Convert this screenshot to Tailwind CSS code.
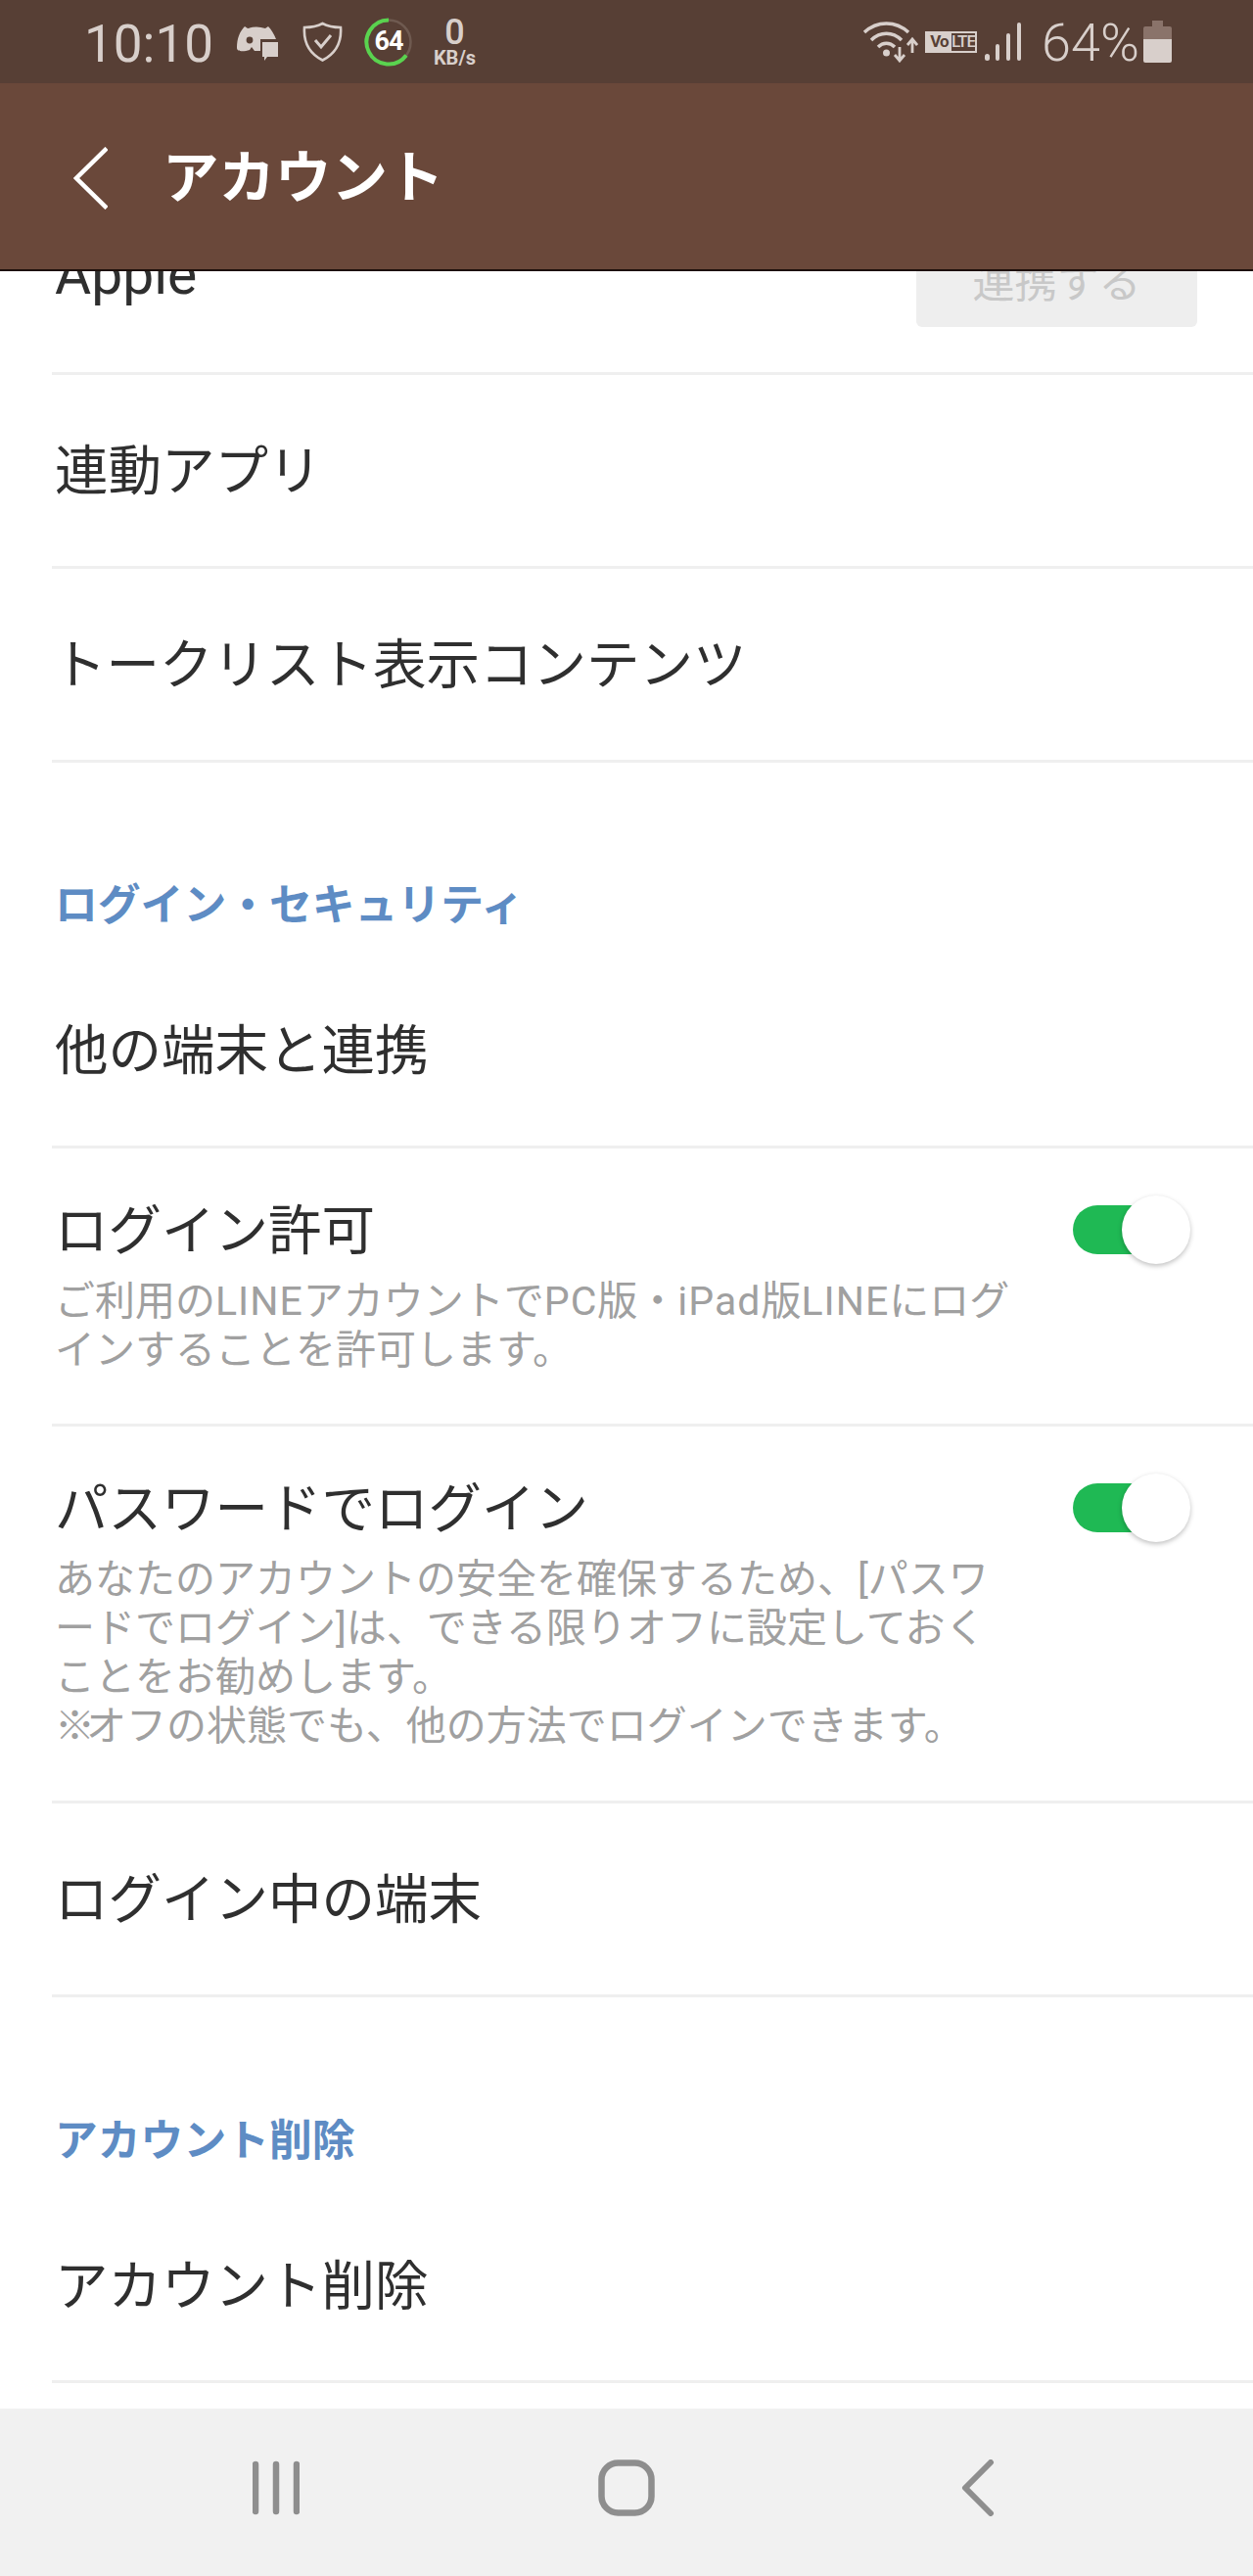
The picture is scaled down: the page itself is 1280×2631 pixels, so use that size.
<!DOCTYPE html>
<html lang="ja">
<head>
<meta charset="utf-8">
<script src="https://cdn.jsdelivr.net/npm/@tailwindcss/browser@4"></script>
<title>アカウント</title>
</head>
<body>
<div class="w-[1280px] h-[2631px] flex flex-col overflow-hidden bg-white font-['Roboto','Noto_Sans_CJK_JP',sans-serif] text-[#2f2f2f]">
  <!-- Status bar -->
  <div class="h-[85px] shrink-0 bg-[#573f35] flex items-center pl-[86px] text-[#d8cfcb]">
    <span class="w-[134px] shrink-0 text-[53px] leading-none font-normal whitespace-nowrap mt-[5px]">10:10</span>
    <svg class="ml-[21px] w-[43px] h-[38px] shrink-0" viewBox="0 0 43 38" fill="#d8cfcb"><path d="M1 25C1 15 4 8 9 3l3 2c6-2 12-2 18 0l3-2c3 3 6 8 8 13H25v12h-6l-3-4-2 3C8 29 1 29 1 25z"/><circle cx="14" cy="17" r="3.400" fill="#573f35"/><path d="M27 19h16v15H32l-3 4v-4h-2z"/></svg>
    <svg class="ml-[25px] w-[41px] h-[41px] shrink-0" viewBox="0 0 41 41" fill="none" stroke="#d8cfcb"><path d="M20.500 2C26 5 32 6 39 6c1 14-4 26-18.500 33.500C6 32 1 20 2 6c7 0 13-1 18.500-4z" stroke-width="2.600"/><path d="M13 19l6 7 10-12" stroke-width="3"/></svg>
    <div class="ml-[22px] w-[50px] h-[50px] shrink-0 relative flex items-center justify-center">
      <svg class="absolute inset-0" viewBox="0 0 50 50" fill="none"><circle cx="25" cy="25" r="22.500" stroke="#6f5a50" stroke-width="2.500"/><path d="M25 2.500A22.500 22.500 0 1 0 43 38.500" stroke="#5ad34f" stroke-width="4"/></svg>
      <span class="relative text-[27px] leading-none font-bold text-white tracking-[-1px]">64</span>
    </div>
    <div class="ml-[18px] w-[49px] shrink-0 flex flex-col items-center">
      <span class="text-[36px] leading-[30px] font-medium">0</span>
      <span class="mt-[2px] text-[20px] leading-[18px] font-bold whitespace-nowrap">KB/s</span>
    </div>
    <svg class="ml-[392px] w-[57px] h-[42px] shrink-0" viewBox="0 0 57 42" fill="none" stroke="#d8cfcb" stroke-width="3.500"><path d="M2 11C15 -1 34 -1 47 11"/><path d="M9 19C18 10 31 10 40 19"/><path d="M16 26c5-5 12-5 17 0"/><circle cx="24.500" cy="32" r="3.500" fill="#d8cfcb" stroke="none"/><path d="M38 26v13m-5-5 5 6 5-6M51 32V19m-5 5 5-6 5 6" stroke-width="2.800"/></svg>
    <div class="ml-[7px] w-[53px] h-[22px] shrink-0 border-[2px] border-[#d8cfcb] flex items-center text-[17px] leading-none font-bold overflow-hidden">
      <span class="w-[25px] h-full bg-[#d8cfcb] text-[#573f35] flex items-center justify-center tracking-[-1px]">Vo</span>
      <span class="flex-1 text-center tracking-[-1px] font-medium">LTE</span>
    </div>
    <svg class="ml-[8px] w-[37px] h-[39px] shrink-0" viewBox="0 0 37 39" fill="#d8cfcb"><rect x="0" y="32" width="5" height="7" rx="2.500"/><rect x="11" y="22" width="4" height="17" rx="2"/><rect x="22" y="11" width="4" height="28" rx="2"/><rect x="33" y="0" width="4" height="39" rx="2"/></svg>
    <span class="ml-[21px] w-[95px] shrink-0 text-[54px] leading-none font-light whitespace-nowrap mt-[3px]">64%</span>
    <svg class="ml-[9px] w-[29px] h-[43px] shrink-0" viewBox="0 0 29 43"><path d="M9 0h11v6h7a2 2 0 0 1 2 2v11H0V8a2 2 0 0 1 2-2h7z" fill="#8a736a"/><path d="M0 19h29v22a2 2 0 0 1-2 2H2a2 2 0 0 1-2-2z" fill="#d8cfcb"/></svg>
  </div>

  <!-- App header -->
  <div class="h-[192px] shrink-0 bg-[#6a483a] border-b-[2px] border-[#1d0f0a] flex items-center pl-[75px] relative z-10">
    <svg class="w-[35px] h-[64px] shrink-0 mt-[4px]" viewBox="0 0 35 64" fill="none" stroke="#fff" stroke-width="4.500"><path d="M34 1.500 3 32l31 30.500"/></svg>
    <h1 class="ml-[56px] text-[57.500px] leading-none font-bold text-white whitespace-nowrap mt-[5px]">アカウント</h1>
  </div>

  <!-- List -->
  <div class="flex-1 min-h-0 overflow-hidden">
    <div class="-mt-[92px]">
      <div class="ml-[53px] h-[198px] border-b-[3px] border-[#efefef] flex items-center pl-[3px] pr-[57px] justify-between">
        <span class="text-[57px] leading-[68px] -mt-[4px]">Apple</span>
        <span class="w-[287px] h-[88px] mt-[14px] rounded-[6px] bg-[#eeeeee] text-[#c8c8c8] text-[43px] flex items-center justify-center">連携する</span>
      </div>
      <div class="ml-[53px] h-[198px] border-b-[3px] border-[#efefef] flex items-center pl-[3px]"><span class="text-[54.500px] leading-[68px]">連動アプリ</span></div>
      <div class="ml-[53px] h-[198px] border-b-[3px] border-[#efefef] flex items-center pl-[1px]"><span class="text-[54.500px] leading-[68px]">トークリスト表示コンテンツ</span></div>

      <div class="h-[196px] flex items-end pl-[56px] pb-[20px] text-[43.800px] leading-[60px] font-bold text-[#5e8cc4]">ログイン・セキュリティ</div>
      <div class="ml-[53px] h-[198px] border-b-[3px] border-[#efefef] flex items-center pl-[3px] pt-[1px]"><span class="text-[54.500px] leading-[68px]">他の端末と連携</span></div>

      <div class="ml-[53px] h-[284px] border-b-[3px] border-[#efefef] pl-[3px] pt-[50px] pr-[64px] flex justify-between items-start">
        <div>
          <div class="text-[54.500px] leading-[68px]">ログイン許可</div>
          <p class="mt-[13px] text-[41px] leading-[50px] text-[#a0a0a0] whitespace-nowrap">ご利用の<span class="tracking-[1px]">LINE</span>アカウントで<span class="tracking-[1px]">PC</span>版・<span class="tracking-[1px]">iPad</span>版<span class="tracking-[1px]">LINE</span>にログ<br>インすることを許可します。</p>
        </div>
        <div class="relative w-[120px] h-[50px] mt-[8px] shrink-0">
          <div class="w-[95px] h-[50px] rounded-full bg-[#1fb954]"></div>
          <div class="absolute left-[50px] -top-[10px] w-[70px] h-[70px] rounded-full bg-white shadow-[0_2px_5px_rgba(0,0,0,0.25)]"></div>
        </div>
      </div>

      <div class="ml-[53px] h-[385px] border-b-[3px] border-[#efefef] pl-[3px] pt-[50px] pr-[64px] flex justify-between items-start">
        <div>
          <div class="text-[54.500px] leading-[68px]">パスワードでログイン</div>
          <p class="mt-[13px] text-[41px] leading-[50px] text-[#a0a0a0] whitespace-nowrap">あなたのアカウントの安全を確保するため、[パスワ<br>ードでログイン]は、できる限りオフに設定しておく<br>ことをお勧めします。<br><span class="tracking-[-13px]">※</span><span class="ml-[4px]">オフの状態でも、他の方法でログインできます。</span></p>
        </div>
        <div class="relative w-[120px] h-[50px] mt-[8px] shrink-0">
          <div class="w-[95px] h-[50px] rounded-full bg-[#1fb954]"></div>
          <div class="absolute left-[50px] -top-[10px] w-[70px] h-[70px] rounded-full bg-white shadow-[0_2px_5px_rgba(0,0,0,0.25)]"></div>
        </div>
      </div>

      <div class="ml-[53px] h-[198px] border-b-[3px] border-[#efefef] flex items-center pl-[3px]"><span class="text-[54.500px] leading-[68px]">ログイン中の端末</span></div>

      <div class="h-[196px] flex items-end pl-[56px] pb-[19px] text-[43.800px] leading-[60px] font-bold text-[#5e8cc4]">アカウント削除</div>
      <div class="ml-[53px] h-[198px] border-b-[3px] border-[#efefef] flex items-center pl-[3px] pt-[2px]"><span class="text-[54.500px] leading-[68px]">アカウント削除</span></div>
    </div>
  </div>

  <!-- Navigation bar -->
  <div class="h-[171px] shrink-0 bg-[#f1f1f1] flex items-center pl-[258px] pb-[9px]">
    <svg class="w-[48px] h-[56px] shrink-0" viewBox="0 0 48 56" fill="none" stroke="#8e8e8e" stroke-width="6.500" stroke-linecap="round"><path d="M3 4v48M24 4v48M45 4v48"/></svg>
    <svg class="ml-[305px] w-[58px] h-[58px] shrink-0" viewBox="0 0 58 58" fill="none" stroke="#8e8e8e" stroke-width="6.500"><rect x="3.500" y="3.500" width="51" height="51" rx="17"/></svg>
    <svg class="ml-[313px] w-[34px] h-[58px] shrink-0" viewBox="0 0 34 58" fill="none" stroke="#8e8e8e" stroke-width="6" stroke-linecap="round" stroke-linejoin="round"><path d="M30 3 4 29l26 26"/></svg>
  </div>
</div>
</body>
</html>
